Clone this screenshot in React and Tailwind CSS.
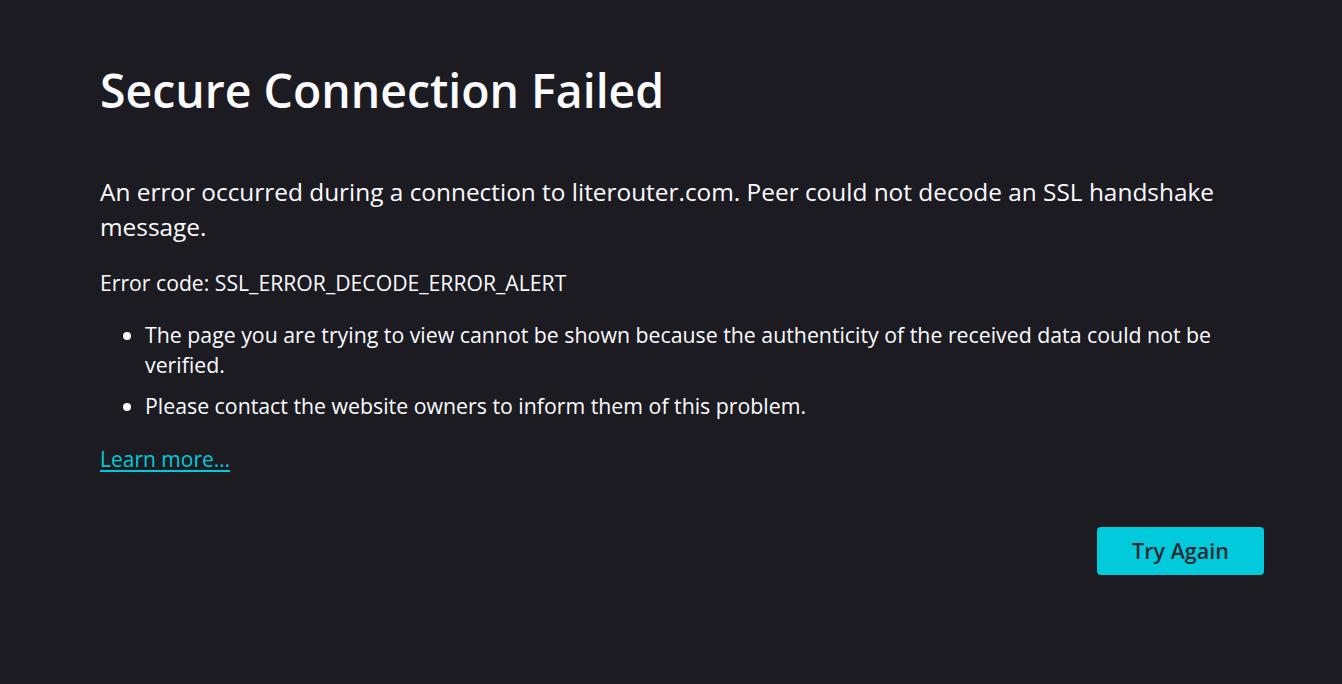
export default function App() {
  return (
    <div className="min-h-[684px] w-full bg-[#1c1b22] text-[#fbfbfe]" style={{ fontFamily: '"Open Sans", "Noto Sans", sans-serif' }}>
      <div className="ml-[100px] w-[1164px] pt-[58px]">
        <h1 className="text-[46.4px] leading-[64px] font-semibold">Secure Connection Failed</h1>
        <p className="mt-[52px] text-[24.4px] leading-[35px]">
          An error occurred during a connection to literouter.com. Peer could not decode an SSL handshake message.
        </p>
        <p className="mt-[24px] text-[21.2px] leading-[30px]">Error code: SSL_ERROR_DECODE_ERROR_ALERT</p>
        <ul className="mt-[22px] ml-[45px] list-disc text-[21.3px] leading-[30px]">
          <li>The page you are trying to view cannot be shown because the authenticity of the received data could not be verified.</li>
          <li className="mt-[11px]">Please contact the website owners to inform them of this problem.</li>
        </ul>
        <a href="#" className="mt-[23px] block w-fit text-[21px] leading-[30px] text-[#00cadb] underline underline-offset-[3px]">Learn more…</a>
        <div className="mt-[53px] flex justify-end">
          <button className="h-[48px] w-[167px] rounded-[4px] bg-[#00cadb] text-[21.5px] font-semibold text-[#2b2a33]">Try Again</button>
        </div>
      </div>
    </div>
  );
}
